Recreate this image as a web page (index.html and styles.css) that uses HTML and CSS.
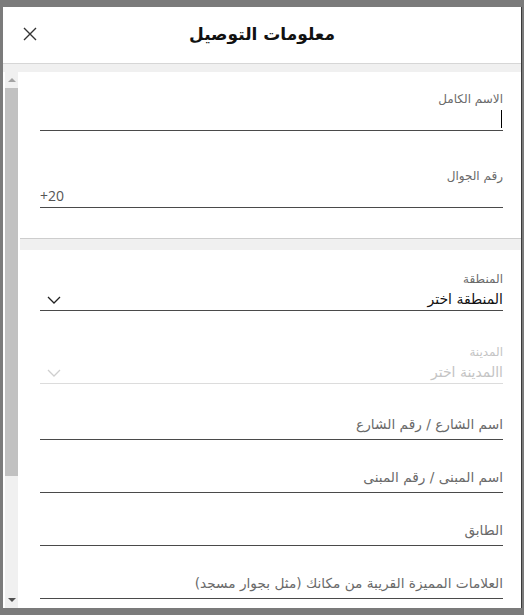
FILE: index.html
```html
<!DOCTYPE html>
<html lang="ar">
<head>
<meta charset="utf-8">
<title>معلومات التوصيل</title>
<link rel="stylesheet" href="styles.css">
</head>
<body>
<div class="page">
  <div class="modal">
    <header class="modal-header">
      <button class="close-btn" aria-label="إغلاق">
        <svg width="14" height="14" viewBox="0 0 14 14"><path d="M1 1 L13 13 M13 1 L1 13" stroke="#333" stroke-width="1.4" fill="none"/></svg>
      </button>
      <h1 class="modal-title">معلومات التوصيل</h1>
    </header>
    <div class="modal-body">
      <div class="scroll-col">
        <div class="scrollbar">
          <div class="sb-arrow sb-up"></div>
          <div class="sb-thumb"></div>
          <div class="sb-rest"></div>
          <div class="sb-arrow sb-down"></div>
        </div>
      </div>
      <div class="content">
        <section class="card card--first">
          <div class="field field--labelled">
            <label class="field-label">الاسم الكامل</label>
            <div class="control"><span class="caret"></span></div>
          </div>
          <div class="field field--labelled field--phone">
            <label class="field-label">رقم الجوال</label>
            <div class="control control--phone">+20</div>
          </div>
        </section>
        <section class="card card--second">
          <div class="field field--labelled">
            <label class="field-label">المنطقة</label>
            <div class="control control--select">
              <span class="select-value">المنطقة اختر</span>
              <svg class="chevron" width="14" height="8" viewBox="0 0 14 8"><path d="M1 1 L7 7 L13 1" stroke="#222" stroke-width="1.3" fill="none"/></svg>
            </div>
          </div>
          <div class="field field--labelled field--disabled field--city">
            <label class="field-label">المدينة</label>
            <div class="control control--select">
              <span class="select-value">االمدينة اختر</span>
              <svg class="chevron" width="14" height="8" viewBox="0 0 14 8"><path d="M1 1 L7 7 L13 1" stroke="#cfcfcf" stroke-width="1.3" fill="none"/></svg>
            </div>
          </div>
          <div class="field field--plain field--street">
            <div class="control placeholder">اسم الشارع / رقم الشارع</div>
          </div>
          <div class="field field--plain">
            <div class="control placeholder">اسم المبنى / رقم المبنى</div>
          </div>
          <div class="field field--plain">
            <div class="control placeholder">الطابق</div>
          </div>
          <div class="field field--plain">
            <div class="control placeholder">العلامات المميزة القريبة من مكانك (مثل بجوار مسجد)</div>
          </div>
        </section>
      </div>
    </div>
  </div>
</div>
</body>
</html>
```

FILE: styles.css
```css
* { box-sizing: border-box; }

html, body {
  margin: 0;
  padding: 0;
  height: 100%;
  overflow: hidden;
  background: #7b7b7b;
  font-family: "DejaVu Sans", "Noto Sans", sans-serif;
}

.page {
  padding: 7px 0 0 3px;
}

.modal {
  width: 519px;
  height: 601px;
  background: #fff;
  border-right: 1px solid #3a3a3a;
  overflow: hidden;
  display: flex;
  flex-direction: column;
}

.modal-header {
  position: relative;
  height: 57px;
  flex: none;
  border-bottom: 1px solid #d6d6d6;
  display: flex;
  align-items: center;
  justify-content: center;
  padding-bottom: 2px;
}

.close-btn {
  position: absolute;
  left: 20px;
  top: 20px;
  width: 14px;
  height: 14px;
  padding: 0;
  border: 0;
  background: none;
  display: flex;
}

.modal-title {
  margin: 0;
  font-size: 17px;
  font-weight: bold;
  color: #111;
  direction: rtl;
}

.modal-body {
  flex: 1;
  display: flex;
  background: #f0f0f0;
  padding-top: 8px;
  min-height: 0;
}

.scroll-col {
  width: 17px;
  flex: none;
  background: #fff;
  padding: 0 2px;
  display: flex;
}

.scrollbar {
  flex: 1;
  background: #f0f0f0;
  display: flex;
  flex-direction: column;
}

.sb-arrow {
  height: 16px;
  flex: none;
  display: flex;
  justify-content: center;
  align-items: center;
}

.sb-up::before,
.sb-down::before {
  content: "";
  width: 0;
  height: 0;
  border-left: 4px solid transparent;
  border-right: 4px solid transparent;
}

.sb-up::before { border-bottom: 4px solid #a3a3a3; }
.sb-down::before { border-top: 4px solid #505050; }

.sb-thumb {
  height: 388px;
  flex: none;
  background: #c1c1c1;
}

.sb-rest { flex: 1; }

.content {
  flex: 1;
  min-width: 0;
  direction: rtl;
}

.card {
  background: #fff;
  padding: 0 18px 0 20px;
}

.card--first {
  padding-top: 18px;
  padding-bottom: 30px;
  border-bottom: 1px solid #cdcdcd;
}

.card--second {
  margin-top: 11px;
  padding-top: 20px;
  padding-bottom: 20px;
}

.field {
  border-bottom: 1px solid #4a4a4a;
  margin-top: 22px;
}

.field:first-child { margin-top: 0; }
.field--phone { margin-top: 36px; }
.field--city { margin-top: 32px; }
.field--street { margin-top: 25px; }

.field-label {
  display: block;
  height: 18px;
  line-height: 18px;
  font-size: 12px;
  color: #6a6a6a;
}

.control {
  height: 22px;
  line-height: 22px;
  font-size: 14px;
  color: #111;
  position: relative;
}

.caret {
  display: block;
  position: absolute;
  right: 1px;
  top: 2px;
  width: 1.5px;
  height: 18px;
  background: #000;
}

.control--phone {
  direction: ltr;
  text-align: left;
  font-family: "Open Sans", "DejaVu Sans", sans-serif;
  color: #555;
}

.control--select {
  display: flex;
  justify-content: space-between;
  align-items: center;
}

.chevron {
  margin-left: 7px;
  margin-top: 1px;
}

.field--disabled {
  border-bottom-color: #dcdcdc;
}

.field--disabled .field-label,
.field--disabled .select-value {
  color: #c4c4c4;
}

.field--plain .control {
  height: 30px;
  line-height: 30px;
  font-size: 13.7px;
  color: #6a6a6a;
}
```
